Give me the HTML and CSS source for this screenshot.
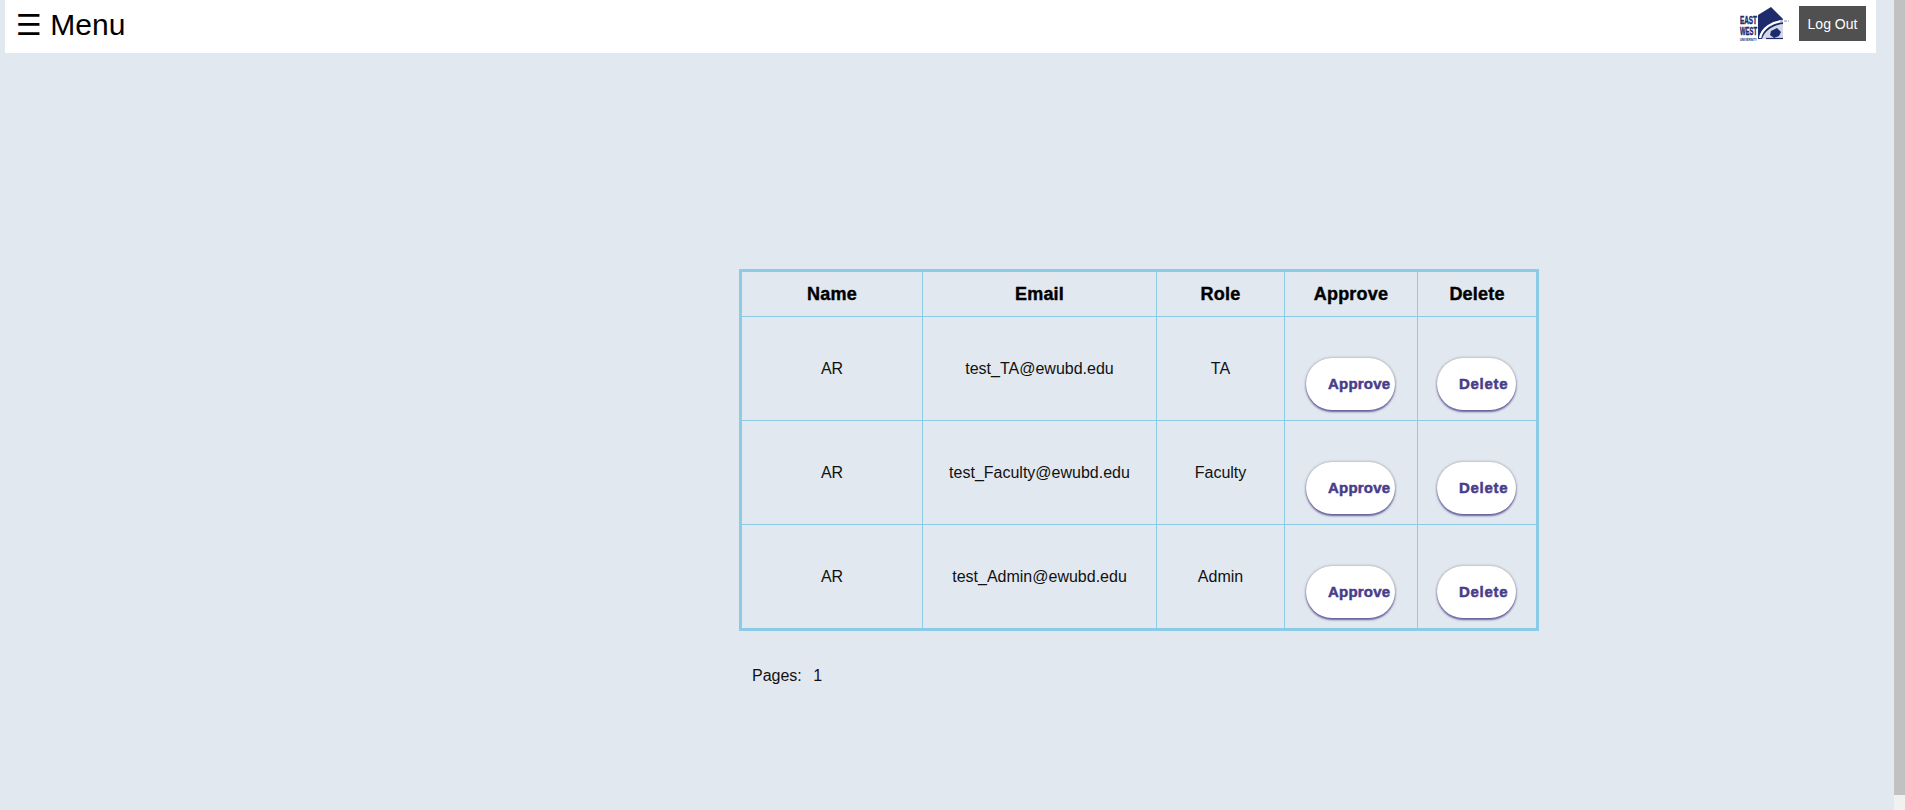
FILE: index.html
```html
<!DOCTYPE html>
<html lang="en">
<head>
  <meta charset="UTF-8" />
  <title>Approve Users</title>
  <link rel="stylesheet" href="styles.css">
</head>
<body>
  <div class="page">
    <div class="topbar">
      <div class="menu-btn"><span class="menu-icon">☰</span> Menu</div>
      <div class="topbar-right">
        <svg class="logo" width="52" height="36" viewBox="0 0 52 36">
          <text class="logo-big" x="2" y="17.5" textLength="17" lengthAdjust="spacingAndGlyphs">EAST</text>
          <text class="logo-big" x="2" y="29" textLength="17" lengthAdjust="spacingAndGlyphs">WEST</text>
          <text class="logo-small" x="2" y="35" textLength="17" lengthAdjust="spacingAndGlyphs">UNIVERSITY</text>
          <path d="M20 9 L33 1 L45 13 L45 33 L20 33 Z" fill="#1d2b6c" />
          <path d="M24 33 C26 25 35 19 45 18 L45 33 Z" fill="#d3d7e6" />
          <path d="M22 32 C24 22 34 16 45 15" fill="none" stroke="#fff" stroke-width="2.4" />
          <path d="M42 15 L51 15" stroke="#7f88ad" stroke-width="1.2" stroke-dasharray="3 1" />
          <path d="M33 25 L39 22 L43 26 L41 30 L36 32 L32 29 Z" fill="#1d2b6c" />
          <path d="M28 32.5 L45 32.5" stroke="#1d2b6c" stroke-width="1.2" />
        </svg>
        <button class="logout">Log Out</button>
      </div>
    </div>

    <div class="content">
      <table class="users">
        <colgroup>
          <col class="col-name"><col class="col-email"><col class="col-role"><col class="col-approve"><col class="col-delete">
        </colgroup>
        <thead>
          <tr><th>Name</th><th>Email</th><th>Role</th><th>Approve</th><th>Delete</th></tr>
        </thead>
        <tbody>
          <tr>
            <td>AR</td><td>test_TA@ewubd.edu</td><td>TA</td>
            <td><button class="pill pill-approve">Approve</button></td>
            <td><button class="pill pill-delete">Delete</button></td>
          </tr>
          <tr>
            <td>AR</td><td>test_Faculty@ewubd.edu</td><td>Faculty</td>
            <td><button class="pill pill-approve">Approve</button></td>
            <td><button class="pill pill-delete">Delete</button></td>
          </tr>
          <tr>
            <td>AR</td><td>test_Admin@ewubd.edu</td><td>Admin</td>
            <td><button class="pill pill-approve">Approve</button></td>
            <td><button class="pill pill-delete">Delete</button></td>
          </tr>
        </tbody>
      </table>
      <div class="pages">Pages: <span class="page-num">1</span></div>
    </div>
  </div>

  <div class="scrollbar">
    <div class="scroll-thumb"></div>
    <div class="scroll-track"></div>
  </div>
</body>
</html>
```

FILE: styles.css
```css
html, body {
  margin: 0;
  height: 810px;
  overflow: hidden;
}
body {
  display: flex;
  font-family: "Liberation Sans", Arial, sans-serif;
  font-size: 16px;
  color: #111;
  background: #e1e8f0;
}
.page {
  flex: 1;
  padding: 0 18px 0 5px;
}
.topbar {
  display: flex;
  justify-content: space-between;
  align-items: flex-start;
  height: 53px;
  background: #fff;
}
.menu-btn {
  padding: 7px 0 0 11px;
  font-size: 30px;
  line-height: 36px;
  color: #000;
}
.menu-icon {
  font-family: "DejaVu Sans", sans-serif;
  font-size: 29px;
  line-height: 36px;
}
.topbar-right {
  display: flex;
  align-items: flex-start;
  padding: 6px 10px 0 0;
}
.logo {
  margin-right: 9px;
}
.logo-big {
  font-family: "Liberation Sans", sans-serif;
  font-weight: bold;
  font-size: 10px;
  stroke: #1d2b6c;
  stroke-width: 0.4px;
  fill: #1d2b6c;
}
.logo-small {
  font-family: "Liberation Sans", sans-serif;
  font-weight: bold;
  font-size: 4px;
  fill: #1d2b6c;
}
.logout {
  width: 67px;
  height: 35px;
  border: none;
  background: #505050;
  color: #fff;
  font-family: inherit;
  font-size: 14px;
}
.content {
  margin: 216px 0 0 734px;
}
.users {
  border-collapse: collapse;
  table-layout: fixed;
  width: 797px;
  border: 3px solid #8bcbe8;
}
.col-name { width: 182px; }
.col-email { width: 234px; }
.col-role { width: 128px; }
.col-approve { width: 133px; }
.col-delete { width: 120px; }
.users th, .users td {
  border: 1px solid #8bcbe8;
  text-align: center;
  padding: 0;
}
.users th {
  height: 44px;
  font-size: 18px;
  letter-spacing: 0.2px;
  color: #000;
  -webkit-text-stroke: 0.4px #000;
}
.users td {
  height: 103px;
}
.pill {
  display: block;
  margin-top: 30px;
  height: 52px;
  border: none;
  border-radius: 26px;
  background: #fff;
  color: #483d8b;
  font-family: inherit;
  font-size: 15px;
  font-weight: bold;
  letter-spacing: 0.2px;
  -webkit-text-stroke: 0.5px #483d8b;
  text-align: left;
  padding: 0 0 0 22px;
  box-shadow: 0 2px 2px rgba(72, 61, 139, 0.75), 0 0 3px rgba(0, 0, 0, 0.35);
}
.pill-approve {
  width: 89px;
  margin-left: 21px;
}
.pill-delete {
  width: 79px;
  margin-left: 19px;
  letter-spacing: 0.7px;
}
.pages {
  margin-top: 36px;
  padding-left: 13px;
}
.page-num {
  margin-left: 7px;
}
.scrollbar {
  display: flex;
  flex-direction: column;
  width: 11px;
  height: 810px;
}
.scroll-thumb {
  flex: 1;
  background: #c1c1c1;
}
.scroll-track {
  height: 15px;
  background: #f1f1f1;
}
```
